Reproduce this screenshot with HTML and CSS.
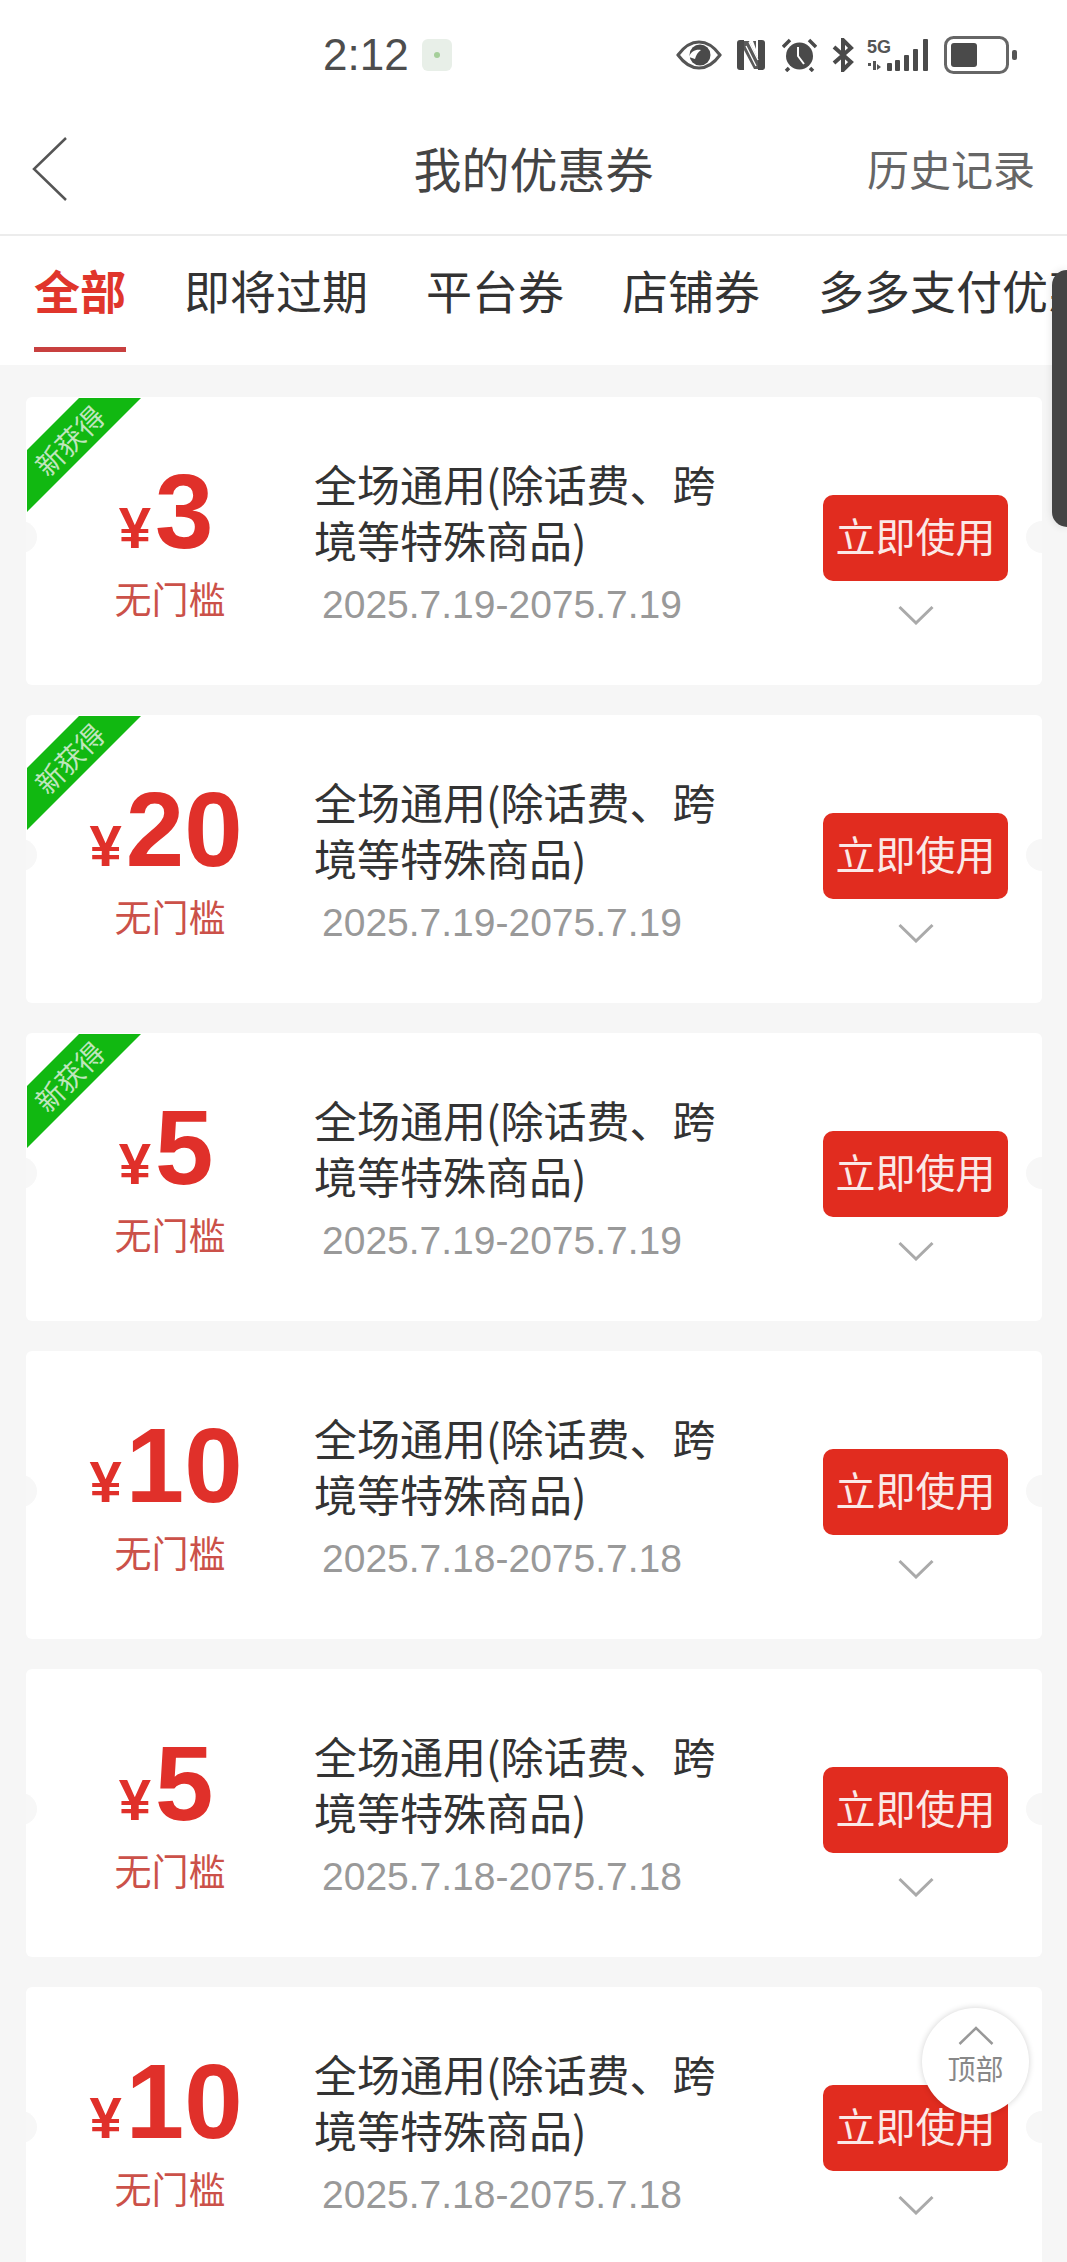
FILE: index.html
```html
<!DOCTYPE html>
<html lang="zh-CN">
<head>
    <meta charset="UTF-8">
    <meta name="viewport" content="width=device-width, initial-scale=1.0">
    <title>我的优惠券</title>
    <link rel="stylesheet" href="styles.css">
</head>
<body>
    <svg class="defs" width="0" height="0">
        <symbol id="chev-down" viewBox="0 0 36 20">
            <path d="M1.5 2 L18 18 L34.5 2" fill="none" stroke="currentColor" stroke-width="3"/>
        </symbol>
    </svg>

    <div class="page">
        <div class="status-bar">
            <span class="time">2:12</span>
            <span class="notify"><i></i></span>
            <div class="status-icons">
                <svg class="ic-eye" width="46" height="30" viewBox="0 0 46 30">
                    <path d="M2 15 C10 4 17 2 23 2 C29 2 36 4 44 15 C36 26 29 28 23 28 C17 28 10 26 2 15 Z" fill="none" stroke="#555" stroke-width="3"/>
                    <circle cx="24" cy="15" r="10.5" fill="#4a4a4a"/>
                    <path d="M13 17 C15 11 20 9 25 10 C22 12 20 15 19 19 Z" fill="#fff"/>
                </svg>
                <svg class="ic-nfc" width="30" height="32" viewBox="0 0 30 32">
                    <path d="M8 1 H4 Q1 1 1 4 V28 Q1 31 4 31 H8 Z" fill="#4a4a4a"/>
                    <path d="M22 1 H26 Q29 1 29 4 V28 Q29 31 26 31 H22 Z" fill="#4a4a4a"/>
                    <path d="M8 2 H13 L22 20 V30 H18 L8 11 Z" fill="#5a5a5a"/>
                    <path d="M10 7 L20 27 M13 3 L22 21" stroke="#fff" stroke-width="1.3"/>
                    <path d="M17 2 H20 V10 Z" fill="#5a5a5a"/>
                </svg>
                <svg class="ic-alarm" width="35" height="34" viewBox="0 0 35 34">
                    <circle cx="17.5" cy="18" r="13.5" fill="#4a4a4a"/>
                    <path d="M16 9 V18 L22 26" fill="none" stroke="#fff" stroke-width="2"/>
                    <path d="M1 9 L8 2 M34 9 L27 2 M7 30 L4 33 M28 30 L31 33" stroke="#4a4a4a" stroke-width="3.5"/>
                </svg>
                <svg class="ic-bt" width="22" height="34" viewBox="0 0 22 34">
                    <path d="M2 9 L19 24 L11 32 V2 L19 10 L2 25" fill="none" stroke="#4a4a4a" stroke-width="4"/>
                </svg>
                <svg class="ic-signal" width="62" height="34" viewBox="0 0 62 34">
                    <text x="0" y="15" class="sig-text">5G</text>
                    <rect x="1" y="25" width="3" height="3" fill="#555"/>
                    <rect x="6" y="23" width="3" height="9" fill="#555"/>
                    <path d="M10 26 L14 29 L10 32 Z" fill="#555"/>
                    <rect x="20" y="25" width="5" height="8" rx="1" fill="#4a4a4a"/>
                    <rect x="28" y="22" width="5" height="11" rx="1" fill="#4a4a4a"/>
                    <rect x="37" y="17" width="5" height="16" rx="1" fill="#4a4a4a"/>
                    <rect x="46" y="11" width="5" height="22" rx="1" fill="#4a4a4a"/>
                    <rect x="56" y="1" width="5" height="32" rx="1" fill="#4a4a4a"/>
                </svg>
                <svg class="ic-battery" width="74" height="38" viewBox="0 0 74 38">
                    <rect x="1.5" y="1.5" width="62" height="35" rx="8" fill="none" stroke="#666" stroke-width="3"/>
                    <rect x="7" y="7" width="26" height="24" rx="3" fill="#4a4a4a"/>
                    <rect x="68" y="14" width="5" height="10" rx="2" fill="#555"/>
                </svg>
            </div>
        </div>

        <div class="nav-bar">
            <div class="nav-back">
                <svg width="36" height="64" viewBox="0 0 36 64">
                    <path d="M34 1 L2 32 L34 63" fill="none" stroke="#555" stroke-width="2.5"/>
                </svg>
            </div>
            <div class="nav-title">我的优惠券</div>
            <div class="nav-history">历史记录</div>
        </div>

        <div class="tabs">
            <div class="tab active">全部</div>
            <div class="tab">即将过期</div>
            <div class="tab">平台券</div>
            <div class="tab">店铺券</div>
            <div class="tab">多多支付优惠券</div>
        </div>

        <div class="coupon-list">
            <div class="coupon">
                <div class="ribbon"><span>新获得</span></div>
                <div class="coupon-left">
                    <div class="amount"><span class="yen">¥</span><span class="num">3</span></div>
                    <div class="limit">无门槛</div>
                </div>
                <div class="coupon-info">
                    <div class="coupon-name">全场通用(除话费、跨境等特殊商品)</div>
                    <div class="coupon-date">2025.7.19-2075.7.19</div>
                </div>
                <div class="coupon-action">
                    <div class="use-btn">立即使用</div>
                    <svg class="more" width="36" height="20"><use href="#chev-down"/></svg>
                </div>
            </div>

            <div class="coupon">
                <div class="ribbon"><span>新获得</span></div>
                <div class="coupon-left">
                    <div class="amount"><span class="yen">¥</span><span class="num">20</span></div>
                    <div class="limit">无门槛</div>
                </div>
                <div class="coupon-info">
                    <div class="coupon-name">全场通用(除话费、跨境等特殊商品)</div>
                    <div class="coupon-date">2025.7.19-2075.7.19</div>
                </div>
                <div class="coupon-action">
                    <div class="use-btn">立即使用</div>
                    <svg class="more" width="36" height="20"><use href="#chev-down"/></svg>
                </div>
            </div>

            <div class="coupon">
                <div class="ribbon"><span>新获得</span></div>
                <div class="coupon-left">
                    <div class="amount"><span class="yen">¥</span><span class="num">5</span></div>
                    <div class="limit">无门槛</div>
                </div>
                <div class="coupon-info">
                    <div class="coupon-name">全场通用(除话费、跨境等特殊商品)</div>
                    <div class="coupon-date">2025.7.19-2075.7.19</div>
                </div>
                <div class="coupon-action">
                    <div class="use-btn">立即使用</div>
                    <svg class="more" width="36" height="20"><use href="#chev-down"/></svg>
                </div>
            </div>

            <div class="coupon">
                <div class="coupon-left">
                    <div class="amount"><span class="yen">¥</span><span class="num">10</span></div>
                    <div class="limit">无门槛</div>
                </div>
                <div class="coupon-info">
                    <div class="coupon-name">全场通用(除话费、跨境等特殊商品)</div>
                    <div class="coupon-date">2025.7.18-2075.7.18</div>
                </div>
                <div class="coupon-action">
                    <div class="use-btn">立即使用</div>
                    <svg class="more" width="36" height="20"><use href="#chev-down"/></svg>
                </div>
            </div>

            <div class="coupon">
                <div class="coupon-left">
                    <div class="amount"><span class="yen">¥</span><span class="num">5</span></div>
                    <div class="limit">无门槛</div>
                </div>
                <div class="coupon-info">
                    <div class="coupon-name">全场通用(除话费、跨境等特殊商品)</div>
                    <div class="coupon-date">2025.7.18-2075.7.18</div>
                </div>
                <div class="coupon-action">
                    <div class="use-btn">立即使用</div>
                    <svg class="more" width="36" height="20"><use href="#chev-down"/></svg>
                </div>
            </div>

            <div class="coupon">
                <div class="coupon-left">
                    <div class="amount"><span class="yen">¥</span><span class="num">10</span></div>
                    <div class="limit">无门槛</div>
                </div>
                <div class="coupon-info">
                    <div class="coupon-name">全场通用(除话费、跨境等特殊商品)</div>
                    <div class="coupon-date">2025.7.18-2075.7.18</div>
                </div>
                <div class="coupon-action">
                    <div class="use-btn">立即使用</div>
                    <svg class="more" width="36" height="20"><use href="#chev-down"/></svg>
                </div>
            </div>
        </div>

        <div class="side-handle"></div>

        <div class="to-top">
            <svg width="36" height="19" viewBox="0 0 36 19">
                <path d="M1.5 18 L18 2 L34.5 18" fill="none" stroke="#999" stroke-width="2.5"/>
            </svg>
            <span>顶部</span>
        </div>
    </div>
</body>
</html>
```

FILE: styles.css
```css
* {
    box-sizing: border-box;
}

html, body {
    margin: 0;
    padding: 0;
}

body {
    font-family: "Noto Sans CJK SC", "Liberation Sans", sans-serif;
    background: #f6f6f6;
}

.defs {
    position: absolute;
}

.page {
    position: relative;
    width: 1067px;
    height: 2262px;
    overflow: hidden;
}

/* status bar */
.status-bar {
    display: flex;
    align-items: center;
    height: 104px;
    padding: 6px 49px 0 323px;
    background: #fff;
}

.time {
    font-family: "Liberation Sans", sans-serif;
    font-size: 44px;
    color: #4d4d4d;
}

.notify {
    display: flex;
    align-items: center;
    justify-content: center;
    width: 30px;
    height: 32px;
    margin-left: 13px;
    border-radius: 6px;
    background: #e8efe8;
}

.notify i {
    width: 6px;
    height: 6px;
    border-radius: 50%;
    background: #a5cf9a;
}

.status-icons {
    display: flex;
    align-items: center;
    margin-left: auto;
}

.ic-eye { margin-right: 14px; }
.ic-nfc { margin-right: 16px; }
.ic-alarm { margin-right: 15px; }
.ic-bt { margin-right: 13px; }
.ic-signal { margin-right: 15px; }

.sig-text {
    font-family: "Liberation Sans", sans-serif;
    font-size: 18px;
    font-weight: bold;
    fill: #555;
}

/* title */
.nav-bar {
    display: grid;
    grid-template-columns: 1fr auto 1fr;
    align-items: center;
    height: 132px;
    padding: 0 32px;
    background: #fff;
    border-bottom: 2px solid #ececec;
}

.nav-back {
    display: flex;
}

.nav-title {
    margin-bottom: 4px;
    font-size: 48px;
    color: #444;
}

.nav-history {
    margin-bottom: 4px;
    font-size: 42px;
    color: #666;
    text-align: right;
}

/* tabs */
.tabs {
    display: flex;
    gap: 58px;
    height: 129px;
    padding: 22px 0 0 34px;
    overflow: hidden;
    background: #fff;
    white-space: nowrap;
}

.tab {
    height: 94px;
    font-size: 46px;
    line-height: 62px;
    color: #333;
}

.tab.active {
    font-weight: bold;
    color: #e0352b;
    border-bottom: 5px solid #c8403f;
}

/* coupons */
.coupon-list {
    display: flex;
    flex-direction: column;
    gap: 30px;
    padding: 32px 25px 0 26px;
}

.coupon {
    position: relative;
    display: flex;
    flex: none;
    height: 288px;
    overflow: hidden;
    border-radius: 6px;
    background: #fff;
}

.coupon::before,
.coupon::after {
    content: "";
    position: absolute;
    top: 124px;
    width: 32px;
    height: 32px;
    border-radius: 50%;
    background: #f7f7f7;
}

.coupon::before {
    left: -21px;
}

.coupon::after {
    right: -16px;
}

.ribbon {
    position: absolute;
    top: 0;
    left: 0;
    z-index: 1;
    width: 116px;
    height: 116px;
}

.ribbon::before {
    content: "";
    position: absolute;
    inset: 0;
    background: #11b811;
    clip-path: polygon(1px 53px, 53px 1px, 115px 1px, 1px 115px);
}

.ribbon span {
    position: absolute;
    top: 23px;
    left: 0;
    width: 86px;
    font-size: 28px;
    line-height: 40px;
    color: #bfe6bd;
    text-align: center;
    white-space: nowrap;
    transform: rotate(-45deg);
}

.coupon-left {
    display: flex;
    flex: none;
    flex-direction: column;
    align-items: center;
    width: 288px;
    padding-top: 65px;
}

.amount {
    display: flex;
    align-items: baseline;
    height: 100px;
    margin-right: 8px;
    font-family: "Liberation Sans", sans-serif;
    font-weight: bold;
    color: #e0302a;
    line-height: 100px;
}

.yen {
    margin-right: 4px;
    font-size: 58px;
}

.num {
    font-size: 105px;
}

.limit {
    margin-top: 13px;
    font-size: 37px;
    line-height: 46px;
    color: #cb5149;
}

.coupon-info {
    width: 509px;
    padding: 58px 85px 0 0;
}

.coupon-name {
    font-size: 43px;
    line-height: 56px;
    color: #333;
}

.coupon-date {
    margin: 15px 0 0 8px;
    font-family: "Liberation Sans", sans-serif;
    font-size: 39px;
    line-height: 46px;
    color: #999;
}

.coupon-action {
    display: flex;
    flex-direction: column;
    align-items: center;
    width: 185px;
    padding-top: 98px;
}

.use-btn {
    width: 185px;
    height: 86px;
    border-radius: 10px;
    background: #e12c1f;
    font-size: 40px;
    line-height: 81px;
    color: #fbe9e7;
    text-align: center;
}

.more {
    margin-top: 24px;
    color: #aaa;
}

/* overlays */
.side-handle {
    position: absolute;
    top: 270px;
    right: 0;
    width: 15px;
    height: 257px;
    border-radius: 20px 0 0 20px;
    background: #444;
    box-shadow: 0 0 8px rgba(0, 0, 0, 0.12);
}

.to-top {
    position: absolute;
    top: 2008px;
    left: 922px;
    display: flex;
    flex-direction: column;
    align-items: center;
    width: 107px;
    height: 107px;
    padding-top: 18px;
    border-radius: 50%;
    background: #fff;
    box-shadow: 0 0 6px rgba(0, 0, 0, 0.18);
}

.to-top span {
    margin-top: 4px;
    font-size: 28px;
    line-height: 38px;
    color: #888;
}
```
